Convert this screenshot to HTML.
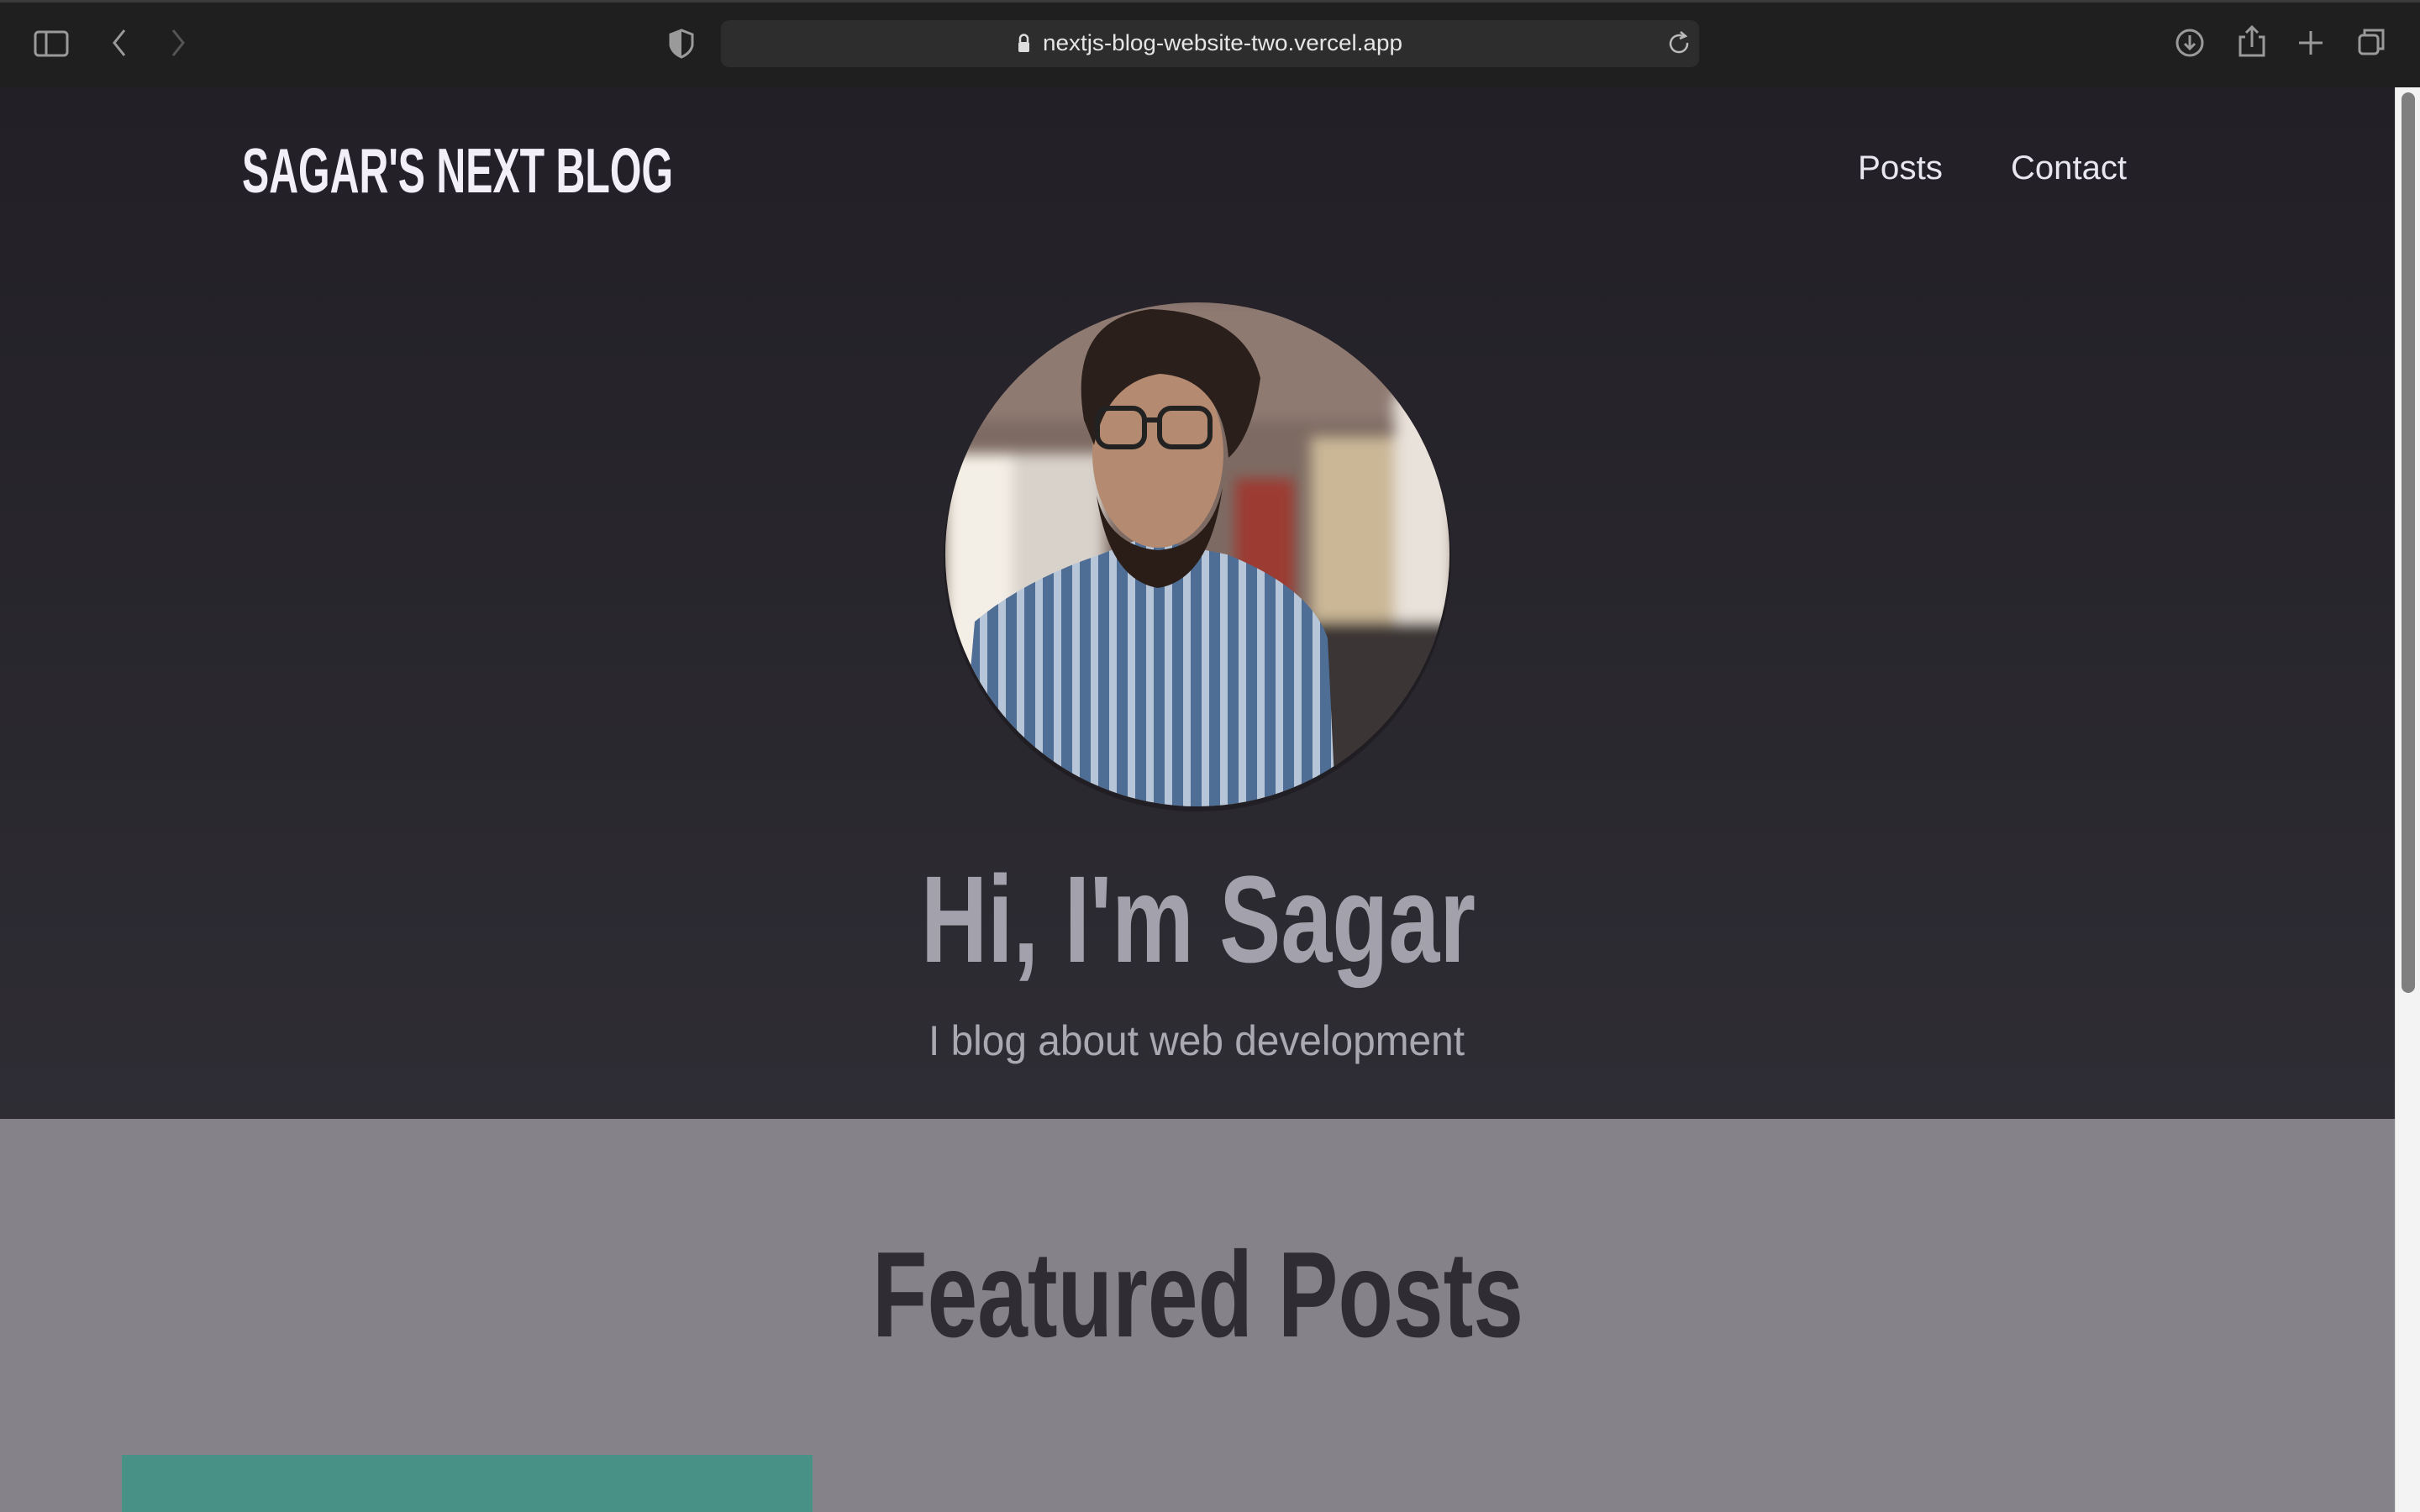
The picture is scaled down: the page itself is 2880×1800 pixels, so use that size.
<!DOCTYPE html>
<html><head><meta charset="utf-8"><style>
html,body{margin:0;padding:0;width:2880px;height:1800px;overflow:hidden;background:#858389;font-family:"Liberation Sans",sans-serif}
.abs{position:absolute}
</style></head><body>
<div class="abs" style="left:0;top:0;width:2880px;height:104px;background:#1f1f1f;border-top:3px solid #3a3a3a;box-sizing:border-box"></div>
<div class="abs" style="left:858px;top:24px;width:1164px;height:56px;background:#2d2d2d;border-radius:10px"></div>
<svg class="abs" style="left:0;top:0" width="2880" height="104">
 <g fill="none" stroke="#9a9a9a" stroke-width="3">
  <rect x="42" y="38" width="38" height="28" rx="4"/><line x1="55" y1="38" x2="55" y2="66"/>
  <path d="M148 36 L136 51 L148 66"/>
 </g>
 <path d="M206 36 L218 51 L206 66" fill="none" stroke="#555" stroke-width="3"/>
 <path d="M811 36 L798 41 L798 54 Q800 63 811 68 Q822 63 824 54 L824 41 Z" fill="none" stroke="#9a9a9a" stroke-width="3"/>
 <path d="M811 36 L811 68 Q800 63 798 54 L798 41Z" fill="#9a9a9a"/>
 <rect x="1212" y="50" width="13" height="12" rx="2" fill="#ddd"/>
 <path d="M1214 50 v-4 a4.5 4.5 0 0 1 9 0 v4" fill="none" stroke="#ddd" stroke-width="2.5"/>
 <text x="1241" y="60" font-family="Liberation Sans" font-size="27" fill="#e6e6e6" textLength="428" lengthAdjust="spacingAndGlyphs">nextjs-blog-website-two.vercel.app</text>
 <path d="M2004 44 a10 10 0 1 0 4 7" fill="none" stroke="#bbb" stroke-width="2.5"/><path d="M2000 38 l6 5 -7 3" fill="none" stroke="#bbb" stroke-width="2.5"/>
 <g fill="none" stroke="#9a9a9a" stroke-width="3">
  <circle cx="2606" cy="51" r="15"/><path d="M2606 42 v16 M2600 52 l6 6 6-6"/>
  <path d="M2672 44 h-6 v22 h28 v-22 h-6 M2680 56 v-24 M2673 39 l7-7 7 7"/>
  <path d="M2750 37 v28 M2736 51 h28"/>
  <rect x="2808" y="42" width="22" height="22" rx="4"/><path d="M2814 42 v-6 h22 v22 h-6"/>
 </g>
</svg>
<div class="abs" style="left:0;top:104px;width:2850px;height:1228px;background:linear-gradient(#222026,#2f2d34)"></div>
<div class="abs" style="left:2850px;top:104px;width:30px;height:1696px;background:#f3f3f3;border-left:1px solid #ddd"></div>
<div class="abs" style="left:2858px;top:110px;width:16px;height:1072px;background:#7f7f7f;border-radius:8px"></div>
<svg class="abs" style="left:0;top:0" width="2850" height="1800">
 <text x="288" y="229" font-family="Liberation Sans" font-weight="bold" font-size="75" fill="#f2eff8" textLength="513" lengthAdjust="spacingAndGlyphs">SAGAR'S NEXT BLOG</text>
 <text x="2211" y="213" font-family="Liberation Sans" font-size="40" fill="#e8e6ee" textLength="101" lengthAdjust="spacingAndGlyphs">Posts</text>
 <text x="2393" y="213" font-family="Liberation Sans" font-size="40" fill="#e8e6ee" textLength="138" lengthAdjust="spacingAndGlyphs">Contact</text>
 <text x="1096" y="1145" font-family="Liberation Sans" font-weight="bold" font-size="147" fill="#a3a1ab" textLength="660" lengthAdjust="spacingAndGlyphs">Hi, I'm Sagar</text>
 <text x="1105" y="1256" font-family="Liberation Sans" font-size="50" fill="#aaa8b1" textLength="638" lengthAdjust="spacingAndGlyphs">I blog about web development</text>
 <rect x="0" y="1332" width="2850" height="468" fill="#858389"/>
 <text x="1038" y="1591" font-family="Liberation Sans" font-weight="bold" font-size="145" fill="#2f2d33" textLength="775" lengthAdjust="spacingAndGlyphs">Featured Posts</text>
 <rect x="145" y="1732" width="822" height="68" fill="#489187"/>
 <defs>
  <clipPath id="c"><circle cx="1425" cy="660" r="300"/></clipPath>
  <pattern id="st" width="22" height="22" patternUnits="userSpaceOnUse"><rect width="22" height="22" fill="#4f6e96"/><rect width="9" height="22" fill="#b6c6d8"/></pattern>
  <filter id="b"><feGaussianBlur stdDeviation="8"/></filter>
 </defs>
 <circle cx="1425" cy="664" r="302" fill="#1a181d" opacity=".6"/>
 <g clip-path="url(#c)">
  <rect x="1125" y="360" width="600" height="600" fill="#7d6b63"/>
  <g filter="url(#b)">
   <rect x="1125" y="360" width="600" height="140" fill="#8f7a72"/>
   <rect x="1125" y="540" width="80" height="300" fill="#f4efe6"/>
   <rect x="1205" y="540" width="110" height="260" fill="#d8d2cb"/>
   <rect x="1470" y="570" width="70" height="160" fill="#9c3a33"/>
   <rect x="1560" y="520" width="100" height="220" fill="#cbb796"/>
   <rect x="1660" y="470" width="70" height="380" fill="#e9e2da"/>
   <rect x="1560" y="740" width="170" height="220" fill="#3b3536"/>
  </g>
  <path d="M1140 970 L1160 740 Q1220 690 1310 660 L1360 640 L1460 660 Q1560 700 1580 760 L1590 970 Z" fill="url(#st)"/>
  <ellipse cx="1378" cy="540" rx="78" ry="112" fill="#b48a70"/>
  <path d="M1305 590 Q1320 690 1378 700 Q1440 690 1455 580 Q1440 650 1378 655 Q1320 650 1305 590Z" fill="#2a1d18"/>
  <path d="M1290 500 Q1270 380 1370 368 Q1480 372 1500 450 Q1490 520 1462 545 Q1455 450 1380 445 Q1318 455 1302 530 Z" fill="#2b1f1b"/>
  <g fill="none" stroke="#222" stroke-width="6"><rect x="1306" y="486" width="56" height="46" rx="14"/><rect x="1380" y="486" width="60" height="46" rx="14"/><path d="M1362 500 h18"/></g>
 </g>
</svg>
</body></html>
